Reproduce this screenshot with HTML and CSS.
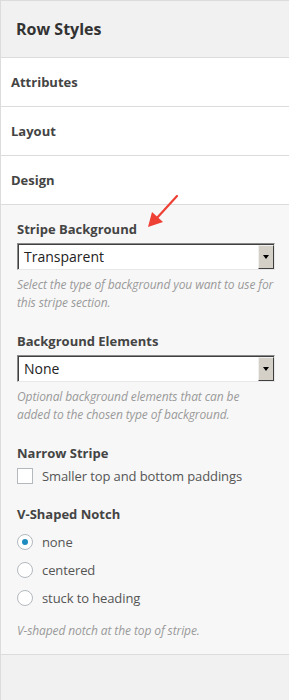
FILE: index.html
```html
<!DOCTYPE html>
<html lang="en">
<head>
    <meta charset="UTF-8">
    <meta name="viewport" content="width=device-width, initial-scale=1.0">
    <title>Row Styles</title>
    <link rel="stylesheet" href="styles.css">
</head>
<body>
    <div class="panel">
        <div class="panel-head">
            <h2>Row Styles</h2>
        </div>

        <div class="tab">Attributes</div>
        <div class="tab">Layout</div>
        <div class="tab">Design</div>

        <div class="design">
            <div class="field">
                <label class="field-label">Stripe Background</label>
                <div class="select">
                    <span class="select-value">Transparent</span>
                    <span class="select-btn"><i class="caret"></i></span>
                </div>
                <p class="hint">Select the type of background you want to use for this stripe section.</p>
            </div>

            <div class="field">
                <label class="field-label">Background Elements</label>
                <div class="select">
                    <span class="select-value">None</span>
                    <span class="select-btn"><i class="caret"></i></span>
                </div>
                <p class="hint">Optional background elements that can be added to the chosen type of background.</p>
            </div>

            <div class="field">
                <label class="field-label">Narrow Stripe</label>
                <div class="option first">
                    <span class="checkbox"></span>
                    <span>Smaller top and bottom paddings</span>
                </div>
            </div>

            <div class="field">
                <label class="field-label">V-Shaped Notch</label>
                <div class="radios">
                    <div class="option"><span class="radio checked"></span><span>none</span></div>
                    <div class="option"><span class="radio"></span><span>centered</span></div>
                    <div class="option"><span class="radio"></span><span>stuck to heading</span></div>
                </div>
                <p class="hint last">V-shaped notch at the top of stripe.</p>
            </div>

            <!-- red pointer -->
            <svg class="pointer" width="40" height="40" viewBox="0 0 40 40">
                <line x1="35" y1="4" x2="14" y2="27" stroke="#ee4035" stroke-width="2.2" stroke-linecap="round"/>
                <polygon points="6,35 10,20 21,30" fill="#ee4035"/>
            </svg>
        </div>

        <div class="panel-foot"></div>
    </div>
</body>
</html>
```

FILE: styles.css
```css
body {
    margin: 0;
    font-family: "Open Sans", "Noto Sans", sans-serif;
    background: #fff;
}

.panel {
    width: 289px;
    height: 700px;
    border-left: 1px solid #dcdcdc;
    border-top: 1px solid #dcdcdc;
    box-sizing: border-box;
    display: flex;
    flex-direction: column;
}

.panel-head {
    height: 56px;
    background: #f1f1f1;
    border-bottom: 1px solid #dcdcdc;
    display: flex;
    align-items: center;
    padding-left: 15px;
}

.panel-head h2 {
    margin: 0;
    font-size: 16px;
    font-weight: 700;
    color: #333;
}

.tab {
    height: 48px;
    border-bottom: 1px solid #dcdcdc;
    background: #fff;
    display: flex;
    align-items: center;
    padding-left: 10px;
    font-size: 13px;
    font-weight: 700;
    color: #444;
}

.design {
    position: relative;
    height: 450px;
    box-sizing: border-box;
    background: #f7f7f7;
    border-bottom: 1px solid #dcdcdc;
    padding: 15px 14px 15px 16px;
}

.field {
    margin-bottom: 20px;
}

.field-label {
    display: block;
    font-size: 13px;
    line-height: 18px;
    font-weight: 700;
    color: #444;
}

.select {
    margin-top: 5px;
    height: 27px;
    box-sizing: border-box;
    display: flex;
    background: #fff;
    border-top: 1px solid #8a8a8a;
    border-left: 1px solid #8a8a8a;
    border-right: 1px solid #e8e8e8;
    border-bottom: 1px solid #e8e8e8;
    box-shadow: inset 1px 1px 0 #404040;
}

.select-value {
    flex: 1;
    padding-left: 6px;
    font-size: 14px;
    line-height: 25px;
    color: #222;
}

.select-btn {
    width: 16px;
    margin: 1px 0 0 0;
    background: #d4d0c8;
    border-left: 1px solid #f0f0f0;
    border-top: 1px solid #f0f0f0;
    border-right: 1px solid #404040;
    border-bottom: 1px solid #404040;
    box-sizing: border-box;
    display: flex;
    align-items: center;
    justify-content: center;
}

.caret {
    width: 0;
    height: 0;
    border-left: 3.5px solid transparent;
    border-right: 3.5px solid transparent;
    border-top: 4px solid #000;
}

.hint {
    margin: 6px 1px 0 0;
    font-size: 12px;
    line-height: 18px;
    font-style: italic;
    letter-spacing: -0.1px;
    color: #9a9a9a;
}

.hint.last {
    margin-top: 15px;
}

.option {
    display: flex;
    align-items: center;
    gap: 9px;
    height: 18px;
    font-size: 13px;
    letter-spacing: -0.1px;
    color: #555;
}

.option.first {
    margin-top: 5px;
}

.radios {
    margin-top: 10px;
    display: flex;
    flex-direction: column;
    gap: 10px;
}

.checkbox {
    width: 16px;
    height: 16px;
    box-sizing: border-box;
    border: 1px solid #b4b9be;
    background: #fff;
}

.radio {
    width: 16px;
    height: 16px;
    box-sizing: border-box;
    border: 1px solid #b4b9be;
    border-radius: 50%;
    background: #fff;
    display: flex;
    align-items: center;
    justify-content: center;
}

.radio.checked::after {
    content: "";
    width: 6px;
    height: 6px;
    border-radius: 50%;
    background: #1e8cbe;
}

.pointer {
    position: absolute;
    left: 141px;
    top: -13px;
}

.panel-foot {
    flex: 1;
    background: #f1f1f1;
}
```
